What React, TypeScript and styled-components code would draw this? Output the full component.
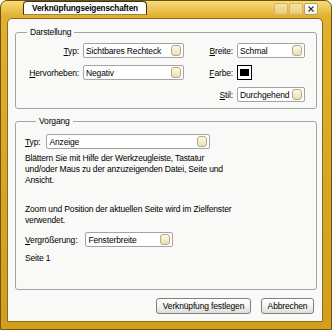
import React from 'react'
import styled, { createGlobalStyle } from 'styled-components'

const font = `'Liberation Sans', Arial, sans-serif`

const GlobalStyle = createGlobalStyle`
  html, body {
    margin: 0;
    padding: 0;
    background: #ffffff;
  }
  body {
    font-family: ${font};
    font-size: 8.5px;
    letter-spacing: -0.15px;
    color: #000;
  }
`

const Window = styled.div`
  box-sizing: border-box;
  width: 332px;
  height: 330px;
  padding: 0 8px 7px 6px;
  display: flex;
  flex-direction: column;
  background: linear-gradient(#f7dc7a, #e0b02e 16px, #d8a522 60%, #d29e1c);
  border: 1px solid #6e5210;
  border-radius: 7px 7px 0 0;
`

const TitleBar = styled.div`
  height: 17px;
  display: flex;
  align-items: flex-start;
`

const Tab = styled.div`
  box-sizing: border-box;
  width: 124px;
  height: 14px;
  margin-left: 16px;
  display: flex;
  align-items: center;
  justify-content: center;
  background: #ffffff;
  border: 1px solid #3d3420;
  border-bottom-color: #9a8240;
  border-radius: 4px 4px 0 0;
  font-weight: bold;
  font-size: 8.2px;
`

const Controls = styled.div`
  margin-left: auto;
  margin-right: 5px;
  margin-top: 2px;
  display: flex;
  gap: 1px;
`

const CtrlButton = styled.div<{ $close?: boolean }>`
  box-sizing: border-box;
  width: 14px;
  height: 12px;
  display: flex;
  align-items: center;
  justify-content: center;
  border: 1px solid ${(p) => (p.$close ? '#b8a060' : '#d4b460')};
  border-radius: 2px;
  background: ${(p) =>
    p.$close
      ? 'linear-gradient(#ffffff, #f2f0e8)'
      : 'linear-gradient(#f6e4a8, #e8cc78)'};
`

const Body = styled.div`
  flex: 1;
  box-sizing: border-box;
  display: flex;
  flex-direction: column;
  padding: 8px 5px 7px 7px;
  background: #f9f9f7;
  border: 1px solid #8a6c18;
  border-radius: 5px 5px 0 0;
`

const Group = styled.fieldset<{ $grow?: boolean }>`
  margin: 0;
  min-inline-size: 0;
  border: 1px solid #a3a3a3;
  border-radius: 3px;
  ${(p) => (p.$grow ? 'flex: 1; margin-top: 7px;' : '')}
`

const Legend = styled.legend`
  margin-left: 11px;
  padding: 0 3px;
  line-height: 11px;
`

const DisplayGrid = styled(Group)`
  padding: 5px 0 6px 0;
  display: grid;
  grid-template-columns: 63px 101px 45px 68px;
  grid-auto-rows: 15px;
  column-gap: 4px;
  row-gap: 7px;
  align-items: center;
`

const ActionGroup = styled(Group)`
  padding: 7px 8px 6px 9px;
  display: flex;
  flex-direction: column;
`

const Label = styled.span<{ $col?: number }>`
  justify-self: end;
  white-space: nowrap;
  ${(p) => (p.$col ? `grid-column: ${p.$col};` : '')}
`

const Combo = styled.div<{ $width?: number }>`
  box-sizing: border-box;
  height: 15px;
  ${(p) => (p.$width ? `width: ${p.$width}px;` : '')}
  display: flex;
  align-items: center;
  padding-left: 2px;
  background: #ffffff;
  border: 1px solid #a4a4a4;
  border-radius: 2px;
  white-space: nowrap;
`

const ComboText = styled.span`
  flex: 1;
  min-width: 0;
  overflow: hidden;
`

const ComboArrow = styled.span`
  flex: none;
  box-sizing: border-box;
  width: 10px;
  height: 11px;
  margin: 0 2px 0 1px;
  border: 1px solid #b4aa86;
  border-radius: 3px;
  background: linear-gradient(#fdf9e6, #e8dfb4);
`

const Swatch = styled.div`
  box-sizing: border-box;
  width: 15px;
  height: 15px;
  padding: 3px 2px;
  background: #ffffff;
  border: 1px solid #000;
`

const SwatchFill = styled.div`
  width: 100%;
  height: 100%;
  background: #000;
`

const Row = styled.div<{ $gap: number; $top?: number }>`
  display: flex;
  align-items: center;
  gap: ${(p) => p.$gap}px;
  margin-top: ${(p) => p.$top ?? 0}px;
`

const Text = styled.p<{ $top: number }>`
  margin: ${(p) => p.$top}px 0 0;
  line-height: 11px;
`

const Footer = styled.div`
  display: flex;
  justify-content: flex-end;
  gap: 10px;
  margin-top: 8px;
  padding-right: 3px;
`

const Button = styled.button<{ $width: number }>`
  box-sizing: border-box;
  width: ${(p) => p.$width}px;
  height: 16px;
  padding: 0;
  font-family: ${font};
  font-size: 8.5px;
  letter-spacing: -0.15px;
  color: #000;
  background: linear-gradient(#ffffff, #f0f0ee 60%, #dedcd6);
  border: 1px solid #7f7f7f;
  border-radius: 3px;
`

function Select({ value, width }: { value: string; width?: number }) {
  return (
    <Combo $width={width}>
      <ComboText>{value}</ComboText>
      <ComboArrow />
    </Combo>
  )
}

export default function App() {
  return (
    <>
      <GlobalStyle />
      <Window>
        <TitleBar>
          <Tab>Verknüpfungseigenschaften</Tab>
          <Controls>
            <CtrlButton />
            <CtrlButton />
            <CtrlButton $close>
              <svg width="6" height="6" viewBox="0 0 6 6">
                <path d="M0.5 0.5 L5.5 5.5 M5.5 0.5 L0.5 5.5" stroke="#333" strokeWidth="1.1" />
              </svg>
            </CtrlButton>
          </Controls>
        </TitleBar>
        <Body>
          <DisplayGrid as="fieldset">
            <Legend>Darstellung</Legend>
            <Label>
              <u>T</u>yp:
            </Label>
            <Select value="Sichtbares Rechteck" />
            <Label>
              <u>B</u>reite:
            </Label>
            <Select value="Schmal" />
            <Label>
              <u>H</u>ervorheben:
            </Label>
            <Select value="Negativ" />
            <Label>
              <u>F</u>arbe:
            </Label>
            <Swatch>
              <SwatchFill />
            </Swatch>
            <Label $col={3}>
              <u>S</u>til:
            </Label>
            <Select value="Durchgehend" />
          </DisplayGrid>
          <ActionGroup $grow>
            <Legend>Vorgang</Legend>
            <Row $gap={6}>
              <span>
                <u>T</u>yp:
              </span>
              <Select value="Anzeige" width={164} />
            </Row>
            <Text $top={4}>
              Blättern Sie mit Hilfe der Werkzeugleiste, Tastatur
              <br />
              und/oder Maus zu der anzuzeigenden Datei, Seite und
              <br />
              Ansicht.
            </Text>
            <Text $top={18}>
              Zoom und Position der aktuellen Seite wird im Zielfenster
              <br />
              verwendet.
            </Text>
            <Row $gap={8} $top={6}>
              <span>
                <u>V</u>ergrößerung:
              </span>
              <Select value="Fensterbreite" width={88} />
            </Row>
            <Text $top={6}>Seite 1</Text>
          </ActionGroup>
          <Footer>
            <Button $width={95}>Verknüpfung festlegen</Button>
            <Button $width={53}>Abbrechen</Button>
          </Footer>
        </Body>
      </Window>
    </>
  )
}
